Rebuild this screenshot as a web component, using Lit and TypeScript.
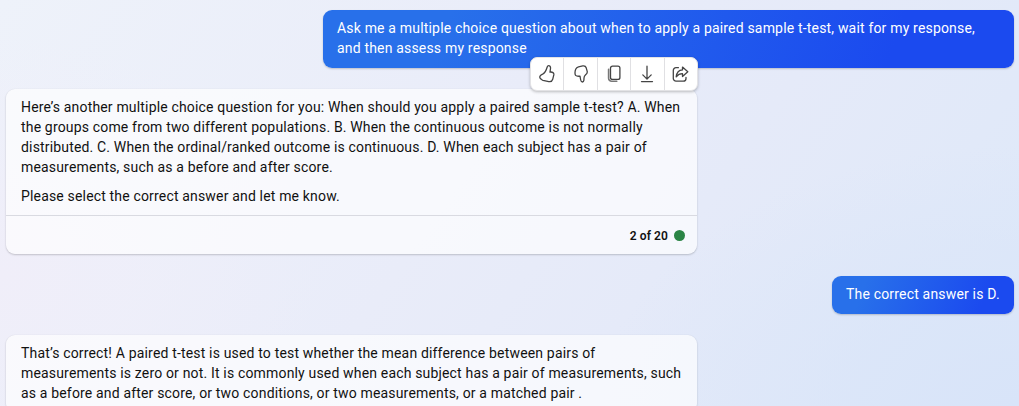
import { LitElement, html, css, svg } from "lit";
import { customElement } from "lit/decorators.js";

const icons = [
  {
    label: "Like",
    shape: svg`<path d="M10.800 .7c1.300.1 1.900 1.300 1.700 2.800L12 7.100c2.500-.4 4.200.8 3.800 2.800l-1.100 4.400c-.6 2-2 2.700-3.900 2.300L5 15.300c-1-.3-1.300-.7-1.900-1.200-1.600-1-1.500-2.300-.9-3.200.6-.9 1.800-1.400 2.800-1.900C7 7.700 8.100 5.800 9.200 2c.3-.9.8-1.400 1.600-1.300z"/>`,
  },
  {
    label: "Dislike",
    shape: svg`<path d="M10.300 17c-1-.1-1.400-.9-1.600-2L8 11.200c-1.800.1-4.300 0-4.700-1.300C2.800 8.200 3 6 3.800 4.100 4.300 2.700 5 2.100 6.500 1.800l4.300-.9c1.700-.3 2.900.3 3.400 1.900l1 3.600c.5 1.800-.6 2.600-1.800 3.600-1 .8-1.300 1.700-1.400 3l-.1 2.300c-.1 1-.7 1.700-1.600 1.700z"/>`,
  },
  {
    label: "Copy",
    shape: svg`<path d="M3.600 4.200v9a3 3 0 0 0 3 3h5.200" stroke="#777" stroke-width="1.600"/><rect x="5.500" y="1.100" width="9.400" height="13.300" rx="2" fill="#fff"/>`,
  },
  {
    label: "Export",
    shape: svg`<path d="M9 1.200v12.600M4.800 9.900 9 14.100l4.200-4.200M3.500 16.600h11"/>`,
  },
  {
    label: "Share",
    shape: svg`<path d="M6.400 2.700H4A2.700 2.700 0 0 0 1.300 5.400v8A2.700 2.700 0 0 0 4 16.100h7.300a2.700 2.700 0 0 0 2.700-2.700v-1"/><path d="M10.500 2.100v2.800C6.800 5.100 4.700 7.500 4.200 11.800c1.700-2.200 3.500-3.100 6.300-3.100v2.800l5.300-4.700z"/>`,
  },
];

@customElement("app-root")
export class AppRoot extends LitElement {
  static styles = css`
    :host {
      display: flex;
      flex-direction: column;
      box-sizing: border-box;
      height: 406px;
      overflow: hidden;
      padding: 10px 5px 0 6px;
      font: 14px/20px Roboto, sans-serif;
      letter-spacing: 0.168px;
      color: #111;
      background:
        radial-gradient(ellipse 420px 260px at 100% 100%, #d8e4f9 0%, #d8e4f900 100%),
        radial-gradient(ellipse 320px 240px at 0% 68%, #f0eef9 0%, #f0eef900 100%),
        linear-gradient(125deg, #eef2fa 0%, #e9ecf9 45%, #e5eaf9 65%, #dde8f9 100%);
    }
    .user {
      align-self: flex-end;
      box-sizing: border-box;
      padding: 8px 14px 10px;
      border-radius: 9px;
      color: #fff;
      letter-spacing: 0.18px;
      background: linear-gradient(110deg, #2870ea 18%, #1b4aef 82%);
      box-shadow: 0 1px 2px #00000033;
      white-space: nowrap;
    }
    .wide {
      width: 691px;
    }
    .card {
      position: relative;
      flex: none;
      width: 691px;
      margin-top: 21px;
      border-radius: 9px;
      background: #ffffffa8;
      box-shadow: 0 1px 2px #00000030, 0 0 1px #0000001a;
      white-space: nowrap;
    }
    .next {
      min-width: 182px;
      margin-top: 22px;
    }
    .body {
      padding: 8px 15px 9px;
    }
    p {
      margin: 0;
    }
    p + p {
      margin-top: 9px;
    }
    .foot {
      display: flex;
      align-items: center;
      justify-content: flex-end;
      gap: 6px;
      height: 38px;
      padding-right: 12px;
      border-top: 1px solid #d9dae1;
      font-size: 12px;
      font-weight: 600;
      letter-spacing: 0.1px;
    }
    .count {
      padding-top: 1px;
    }
    .dot {
      width: 11px;
      height: 11px;
      border-radius: 50%;
      background: #2a8445;
    }
    .tools {
      position: absolute;
      top: -32px;
      right: -1px;
      display: flex;
      width: 168px;
      height: 34px;
      box-sizing: border-box;
      border: 1px solid #e3e3e6;
      border-radius: 7px;
      background: #fff;
      box-shadow: 0 1px 3px #00000040;
    }
    .tool {
      flex: 1;
      display: flex;
      align-items: center;
      justify-content: center;
    }
    .tool + .tool {
      border-left: 1px solid #e0e0e3;
    }
    svg {
      width: 18px;
      height: 18px;
      fill: none;
      stroke: #444;
      stroke-width: 1.3;
      stroke-linecap: round;
      stroke-linejoin: round;
    }
  `;

  render() {
    return html`
      <div class="user wide">
        Ask me a multiple choice question about when to apply a paired sample t-test, wait for my response,<br />and then assess my response
      </div>
      <div class="card">
        <div class="body">
          <p>
            Here’s another multiple choice question for you: When should you apply a paired sample t-test? A. When<br />the groups come from two different populations. B. When the continuous outcome is not normally<br />distributed. C. When the ordinal/ranked outcome is continuous. D. When each subject has a pair of<br />measurements, such as a before and after score.
          </p>
          <p>Please select the correct answer and let me know.</p>
        </div>
        <div class="foot"><span class="count">2 of 20</span><span class="dot"></span></div>
        <div class="tools">
          ${icons.map((i) => html`<div class="tool"><svg viewBox="0 0 18 18" role="img" aria-label=${i.label}>${i.shape}</svg></div>`)}
        </div>
      </div>
      <div class="user next">The correct answer is D.</div>
      <div class="card">
        <div class="body">
          <p>
            That’s correct! A paired t-test is used to test whether the mean difference between pairs of<br />measurements is zero or not. It is commonly used when each subject has a pair of measurements, such<br />as a before and after score, or two conditions, or two measurements, or a matched pair .
          </p>
        </div>
      </div>
    `;
  }
}
